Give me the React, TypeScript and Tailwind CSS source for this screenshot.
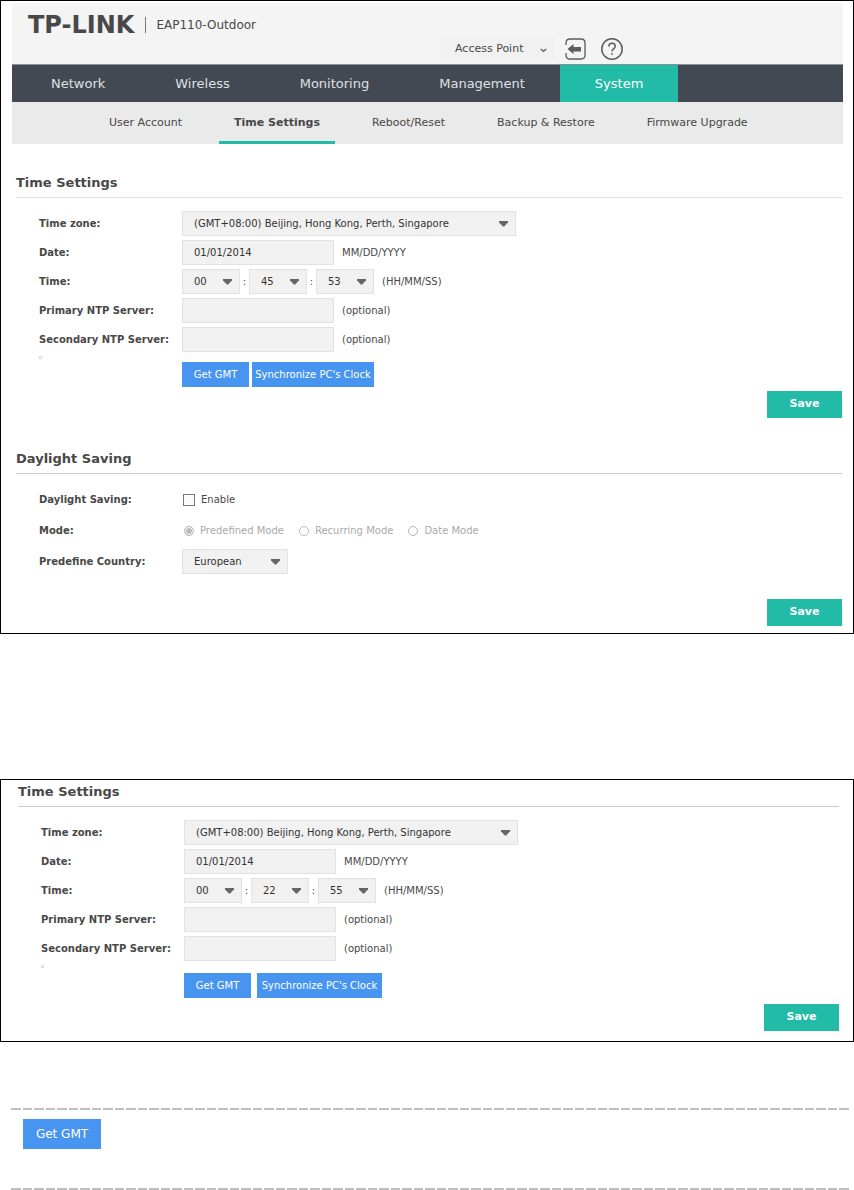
import { useId, useState } from "react"
import type { ReactNode } from "react"
import clsx from "clsx"

const mainTabs = ["Network", "Wireless", "Monitoring", "Management", "System"]
const subTabs = ["User Account", "Time Settings", "Reboot/Reset", "Backup & Restore", "Firmware Upgrade"]
const modes = ["Predefined Mode", "Recurring Mode", "Date Mode"]

interface SelectProps {
  id?: string
  label?: string
  options: string[]
  className?: string
}

function Select({ id, label, options, className }: SelectProps) {
  return (
    <div className={clsx("relative h-[25px]", className)}>
      <select
        id={id}
        aria-label={label}
        className="w-full h-full appearance-none border border-[#e2e2e2] bg-[#f1f1f1] pl-[11px] pr-5 text-[10px] text-[#333] outline-none"
      >
        {options.map(o => (
          <option key={o}>{o}</option>
        ))}
      </select>
      <svg
        className="pointer-events-none absolute right-2 top-[10px]"
        width="9"
        height="6"
        viewBox="0 0 9 6"
        fill="#666"
        aria-hidden="true"
      >
        <path d="M0 0h9v1.2L5.2 5.6H3.8L0 1.2z" />
      </svg>
    </div>
  )
}

function TextField({ id, value = "" }: { id: string; value?: string }) {
  return (
    <input
      id={id}
      type="text"
      defaultValue={value}
      className="w-[152px] h-[25px] border border-[#e2e2e2] bg-[#f1f1f1] px-[11px] text-[10px] text-[#333] outline-none"
    />
  )
}

function Row({ id, label, children }: { id?: string; label: string; children: ReactNode }) {
  return (
    <div className="flex min-h-[25px] items-center">
      <label htmlFor={id} className="w-[143px] shrink-0 font-bold">
        {label}
      </label>
      <div className="flex items-center gap-2">{children}</div>
    </div>
  )
}

function Heading({ children, className = "border-[#ccc]" }: { children: ReactNode; className?: string }) {
  return <h2 className={clsx("border-b pb-[6px] text-[13px] leading-4 font-bold", className)}>{children}</h2>
}

function BlueButton({ children, className }: { children: ReactNode; className?: string }) {
  return (
    <button type="button" className={clsx("bg-[#4795f1] text-white whitespace-nowrap", className)}>
      {children}
    </button>
  )
}

function SaveButton({ className }: { className?: string }) {
  return (
    <div className={clsx("flex justify-end", className)}>
      <button type="button" className="w-[75px] h-[27px] bg-[#21bba8] text-[11px] font-bold text-white">
        Save
      </button>
    </div>
  )
}

interface TimeSettingsProps {
  time: string[]
  headingClass?: string
  buttonsClass: string
  syncClass: string
  saveClass: string
}

function TimeSettings({ time, headingClass, buttonsClass, syncClass, saveClass }: TimeSettingsProps) {
  const id = useId()
  const units = ["Hours", "Minutes", "Seconds"]

  return (
    <section>
      <Heading className={headingClass}>Time Settings</Heading>
      <div className="flex flex-col gap-1 pt-[13px] pl-[23px]">
        <Row id={id + "zone"} label="Time zone:">
          <Select
            id={id + "zone"}
            className="w-[334px]"
            options={["(GMT+08:00) Beijing, Hong Kong, Perth, Singapore"]}
          />
        </Row>
        <Row id={id + "date"} label="Date:">
          <TextField id={id + "date"} value="01/01/2014" />
          <span>MM/DD/YYYY</span>
        </Row>
        <Row id={id + "time0"} label="Time:">
          <div className="flex items-center">
            {time.map((t, i) => (
              <div key={units[i]} className="flex items-center">
                {i > 0 && <span className="w-[9px] text-center">:</span>}
                <Select id={id + "time" + i} label={units[i]} className="w-[58px]" options={[t]} />
              </div>
            ))}
          </div>
          <span>(HH/MM/SS)</span>
        </Row>
        <Row id={id + "ntp1"} label="Primary NTP Server:">
          <TextField id={id + "ntp1"} />
          <span>(optional)</span>
        </Row>
        <Row id={id + "ntp2"} label="Secondary NTP Server:">
          <TextField id={id + "ntp2"} />
          <span>(optional)</span>
        </Row>
      </div>
      <div className="flex pl-[23px]">
        <div className="w-[143px] shrink-0 pt-1">
          <div className="size-[3px] border border-[#ddd]" />
        </div>
        <div className={clsx("flex", buttonsClass)}>
          <BlueButton className="w-[67px] h-[25px]">Get GMT</BlueButton>
          <BlueButton className={clsx("h-[25px]", syncClass)}>Synchronize PC's Clock</BlueButton>
        </div>
      </div>
      <SaveButton className={saveClass} />
    </section>
  )
}

function DaylightSaving() {
  const id = useId()
  const [enabled, setEnabled] = useState(false)
  const [mode, setMode] = useState(modes[0])

  return (
    <section className="pt-[33px]">
      <Heading>Daylight Saving</Heading>
      <div className="flex flex-col gap-[6px] pt-[13px] pl-[23px]">
        <Row id={id + "enable"} label="Daylight Saving:">
          <div className="flex items-center gap-[6px] pl-px">
            <input
              id={id + "enable"}
              type="checkbox"
              checked={enabled}
              onChange={e => setEnabled(e.target.checked)}
              className="size-3 appearance-none border border-[#777] bg-[#fafafa] checked:bg-[#21bba8]"
            />
            <label htmlFor={id + "enable"}>Enable</label>
          </div>
        </Row>
        <Row label="Mode:">
          <div className={clsx("flex gap-[15px] pl-[2px]", !enabled && "text-[#aaa]")}>
            {modes.map(m => (
              <label key={m} className="flex items-center gap-[6px]">
                <input
                  type="radio"
                  name={id + "mode"}
                  checked={mode === m}
                  disabled={!enabled}
                  onChange={() => setMode(m)}
                  className="size-[10px] appearance-none rounded-full border border-[#b5b5b5] bg-white checked:bg-[#bbb] checked:shadow-[inset_0_0_0_1px_#fff]"
                />
                {m}
              </label>
            ))}
          </div>
        </Row>
        <Row id={id + "country"} label="Predefine Country:">
          <Select id={id + "country"} className="w-[106px]" options={["European"]} />
        </Row>
      </div>
      <SaveButton className="pt-[25px]" />
    </section>
  )
}

function Header() {
  return (
    <header className="mr-[10px] ml-[11px]">
      <div className="h-[61px] bg-[#f4f4f4]">
        <div className="flex h-[35px] items-center pt-[9px] pl-4">
          <span className="text-[24px] leading-6 font-bold">TP-LINK</span>
          <span className="ml-[11px] h-4 w-px bg-[#777]" />
          <span className="ml-[10px] text-[12px]">EAP110-Outdoor</span>
        </div>
        <div className="flex h-[22px] items-center pl-[429px]">
          <div className="relative h-[22px] w-[113px]">
            <select
              aria-label="Operation mode"
              className="h-full w-full appearance-none bg-[#f1f1f1] pl-[14px] text-[11px] outline-none"
            >
              <option>Access Point</option>
            </select>
            <svg
              className="pointer-events-none absolute top-[10px] right-[7px]"
              width="7"
              height="5"
              viewBox="0 0 7 5"
              fill="none"
              stroke="#666"
              strokeWidth="1.4"
              aria-hidden="true"
            >
              <path d="M.7 1l2.8 2.3L6.3 1" />
            </svg>
          </div>
          <button type="button" aria-label="Log out" className="ml-[11px]">
            <svg width="22" height="22" viewBox="0 0 22 22" fill="none" stroke="#5c5c5c" strokeWidth="1.3">
              <path d="M1 7V5q0-4 4-4h11q4 0 4 4v12q0 4-4 4H5q-4 0-4-4v-2" />
              <path d="M2.5 11l6-5v3H16v4.500H8.500V16z" fill="#5c5c5c" stroke="none" />
            </svg>
          </button>
          <button type="button" aria-label="Help" className="ml-[13px]">
            <svg width="24" height="24" viewBox="0 0 24 24" fill="none" stroke="#5c5c5c" strokeWidth="1.5">
              <circle cx="12" cy="12" r="10.2" />
              <path d="M8.800 9.500q0-3.200 3.200-3.200t3.200 2.900q0 1.500-1.600 2.600T12 14.500" />
              <path d="M12 16v1.800" />
            </svg>
          </button>
        </div>
      </div>
      <nav className="flex h-[38px] border-t border-[#8b8f96] bg-[#434953] pl-1 text-[13px]">
        {mainTabs.map(t => (
          <a
            key={t}
            href="#"
            className={clsx(
              "flex items-center px-[35px]",
              t === "System" ? "bg-[#21bba8] text-white" : "text-[#dfe0e2]"
            )}
          >
            {t}
          </a>
        ))}
      </nav>
      <nav className="flex h-[42px] gap-[22px] bg-[#eaeaea] pl-[82px] text-[11px]">
        {subTabs.map(t => (
          <a
            key={t}
            href="#"
            className={clsx(
              "flex items-center border-b-3 px-[15px] pt-1",
              t === "Time Settings" ? "border-[#21bba8] font-bold" : "border-transparent"
            )}
          >
            {t}
          </a>
        ))}
      </nav>
    </header>
  )
}

function DashedRule() {
  return (
    <div className="h-[2px] bg-[repeating-linear-gradient(90deg,#bfbfbf_0_10px,transparent_10px_12px,#bfbfbf_12px_21px,transparent_21px_23px)]" />
  )
}

export default function App() {
  return (
    <div className="bg-white font-['DejaVu_Sans',Verdana,sans-serif] text-[10px] text-[#484848]">
      <div className="border border-black pt-[2px] pb-[7px]">
        <Header />
        <main className="pt-[31px] pr-[11px] pl-[15px]">
          <TimeSettings
            time={["00", "45", "53"]}
            headingClass="border-[#e0e0e0]"
            buttonsClass="gap-[3px] pt-[10px]"
            syncClass="w-[122px]"
            saveClass="pt-1"
          />
          <DaylightSaving />
        </main>
      </div>

      <div className="mt-[145px] border border-black pt-1 pr-[14px] pb-[10px] pl-[17px]">
        <TimeSettings
          time={["00", "22", "55"]}
          buttonsClass="gap-[6px] pt-3"
          syncClass="w-[125px]"
          saveClass="pt-[6px]"
        />
      </div>

      <div className="mt-[66px] pr-[5px] pl-[11px]">
        <DashedRule />
        <div className="pt-[9px] pb-[39px] pl-3">
          <BlueButton className="h-[30px] w-[78px] text-[12px]">Get GMT</BlueButton>
        </div>
        <DashedRule />
      </div>
    </div>
  )
}
